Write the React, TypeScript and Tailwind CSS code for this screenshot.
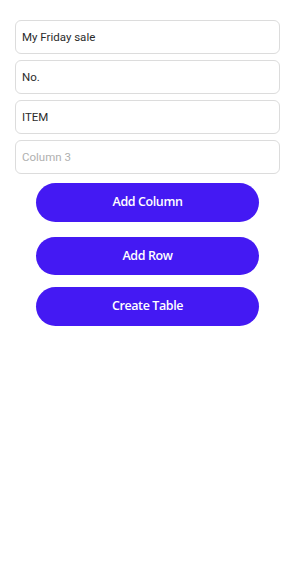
import { useState } from "react";

const fields = [
  { value: "My Friday sale", placeholder: "Table name" },
  { value: "No.", placeholder: "Column 1" },
  { value: "ITEM", placeholder: "Column 2" },
  { value: "", placeholder: "Column 3" },
];

export default function App() {
  const [values, setValues] = useState(fields.map((f) => f.value));

  return (
    <div className="min-h-screen bg-white px-[15px] pt-[20px] font-['Roboto',sans-serif]">
      <div className="flex flex-col gap-[6px]">
        {fields.map((f, i) => (
          <input
            key={i}
            value={values[i]}
            placeholder={f.placeholder}
            onChange={(e) => {
              const next = [...values];
              next[i] = e.target.value;
              setValues(next);
            }}
            className="h-[34px] w-full rounded-[6px] border border-[#dcdcdc] px-[6px] text-[11.5px] text-[#2b2b2b] placeholder:text-[#b0b0b0] outline-none"
          />
        ))}
      </div>
      <div className="mx-[21px] mt-[9px] flex flex-col font-['Open_Sans',sans-serif]">
        <button className="h-[39px] rounded-full bg-[#4419f3] text-[12.5px] font-semibold tracking-[-0.4px] text-white">
          Add Column
        </button>
        <button className="mt-[15px] h-[38px] rounded-full bg-[#4419f3] text-[12.5px] font-semibold tracking-[-0.4px] text-white">
          Add Row
        </button>
        <button className="mt-[12px] h-[39px] rounded-full bg-[#4419f3] text-[12.5px] font-semibold tracking-[-0.4px] text-white">
          Create Table
        </button>
      </div>
    </div>
  );
}
